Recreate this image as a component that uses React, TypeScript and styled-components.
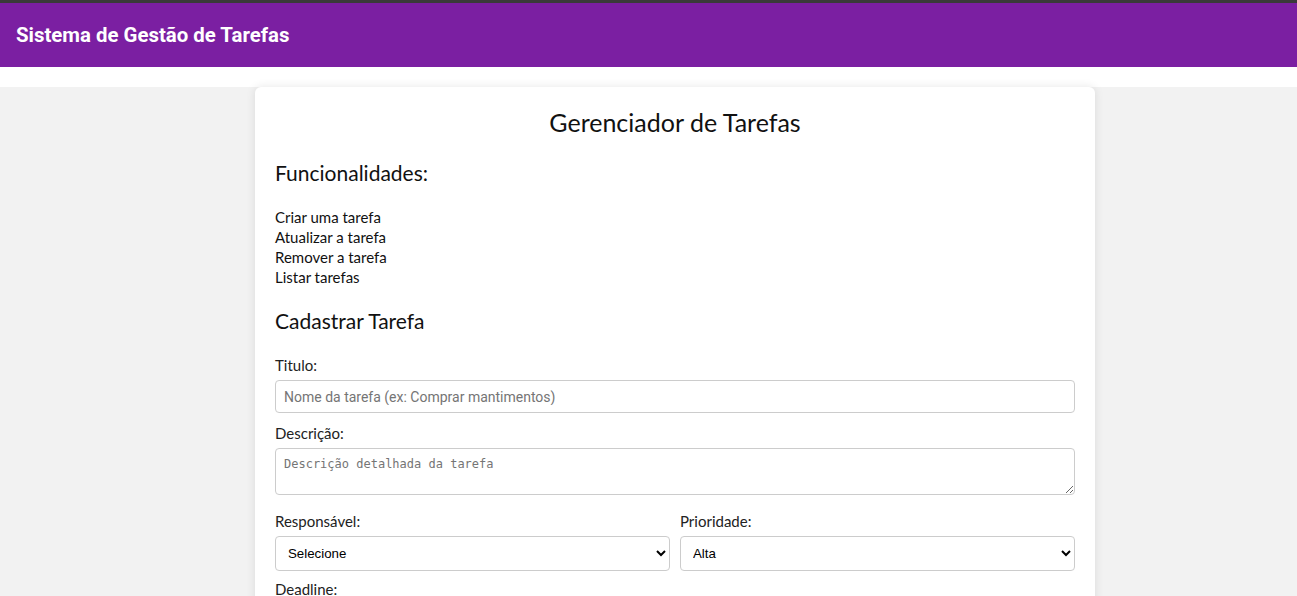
import React from "react";
import styled, { createGlobalStyle } from "styled-components";

const GlobalStyle = createGlobalStyle`
  html, body {
    margin: 0;
    padding: 0;
    background: #ffffff;
    font-family: "Lato", "Open Sans", sans-serif;
    color: #111;
  }
  * { box-sizing: border-box; }
`;

const TopStrip = styled.div`
  height: 3px;
  background: #3a3a3a;
`;

const Header = styled.header`
  height: 64px;
  background: #7b1fa2;
  display: flex;
  align-items: center;
  padding: 0 16px;
`;

const HeaderTitle = styled.h1`
  margin: 0;
  font-family: "Roboto", sans-serif;
  font-weight: 700;
  font-size: 20.4px;
  color: #ffffff;
`;

const Main = styled.main`
  margin-top: 20px;
  background: #f2f2f2;
  min-height: 520px;
  display: flex;
  justify-content: center;
  padding-left: 53px;
`;

const Card = styled.section`
  width: 840px;
  background: #ffffff;
  border-radius: 6px;
  box-shadow: 0 0 10px rgba(0, 0, 0, 0.1);
  padding: 20px 20px 40px;
`;

const PageTitle = styled.h2`
  margin: 0;
  text-align: center;
  font-weight: 400;
  font-size: 25px;
  line-height: 30px;
`;

const SectionTitle = styled.h3<{ $top: number }>`
  margin: ${(p) => p.$top}px 0 0;
  font-weight: 400;
  font-size: 21px;
  line-height: 26px;
`;

const FeatureList = styled.ul`
  list-style: none;
  margin: 21px 0 0;
  padding: 0;
  font-size: 15px;
  line-height: 20px;
`;

const Label = styled.label`
  display: block;
  font-size: 15px;
  line-height: 18px;
  margin-bottom: 6px;
  color: #222;
`;

const Field = styled.div<{ $top: number }>`
  margin-top: ${(p) => p.$top}px;
`;

const TextInput = styled.input`
  width: 100%;
  height: 33px;
  border: 1px solid #cccccc;
  border-radius: 4px;
  padding: 0 8px;
  font-family: "Roboto", sans-serif;
  font-size: 14px;
  &::placeholder { color: #757575; }
`;

const TextArea = styled.textarea`
  display: block;
  width: 100%;
  height: 47px;
  border: 1px solid #cccccc;
  border-radius: 4px;
  padding: 8px;
  font-family: "DejaVu Sans Mono", monospace;
  font-size: 12px;
  resize: vertical;
  &::placeholder { color: #757575; }
`;

const Row = styled.div`
  display: grid;
  grid-template-columns: 1fr 1fr;
  gap: 10px;
  margin-top: 17px;
`;

const Select = styled.select`
  width: 100%;
  height: 35px;
  border: 1px solid #cccccc;
  border-radius: 4px;
  padding: 0 8px;
  background: #ffffff;
  font-family: "Liberation Sans", Arial, sans-serif;
  font-size: 13.3px;
  color: #000;
`;

const features = [
  "Criar uma tarefa",
  "Atualizar a tarefa",
  "Remover a tarefa",
  "Listar tarefas",
];

export default function App() {
  return (
    <>
      <GlobalStyle />
      <TopStrip />
      <Header>
        <HeaderTitle>Sistema de Gestão de Tarefas</HeaderTitle>
      </Header>
      <Main>
        <Card>
          <PageTitle>Gerenciador de Tarefas</PageTitle>
          <SectionTitle $top={23}>Funcionalidades:</SectionTitle>
          <FeatureList>
            {features.map((f) => (
              <li key={f}>{f}</li>
            ))}
          </FeatureList>
          <SectionTitle $top={21}>Cadastrar Tarefa</SectionTitle>
          <Field $top={22}>
            <Label>Titulo:</Label>
            <TextInput placeholder="Nome da tarefa (ex: Comprar mantimentos)" />
          </Field>
          <Field $top={11}>
            <Label>Descrição:</Label>
            <TextArea placeholder="Descrição detalhada da tarefa" />
          </Field>
          <Row>
            <div>
              <Label>Responsável:</Label>
              <Select defaultValue="">
                <option value="">Selecione</option>
              </Select>
            </div>
            <div>
              <Label>Prioridade:</Label>
              <Select defaultValue="alta">
                <option value="alta">Alta</option>
                <option value="media">Média</option>
                <option value="baixa">Baixa</option>
              </Select>
            </div>
          </Row>
          <Field $top={9}>
            <Label>Deadline:</Label>
          </Field>
        </Card>
      </Main>
    </>
  );
}
